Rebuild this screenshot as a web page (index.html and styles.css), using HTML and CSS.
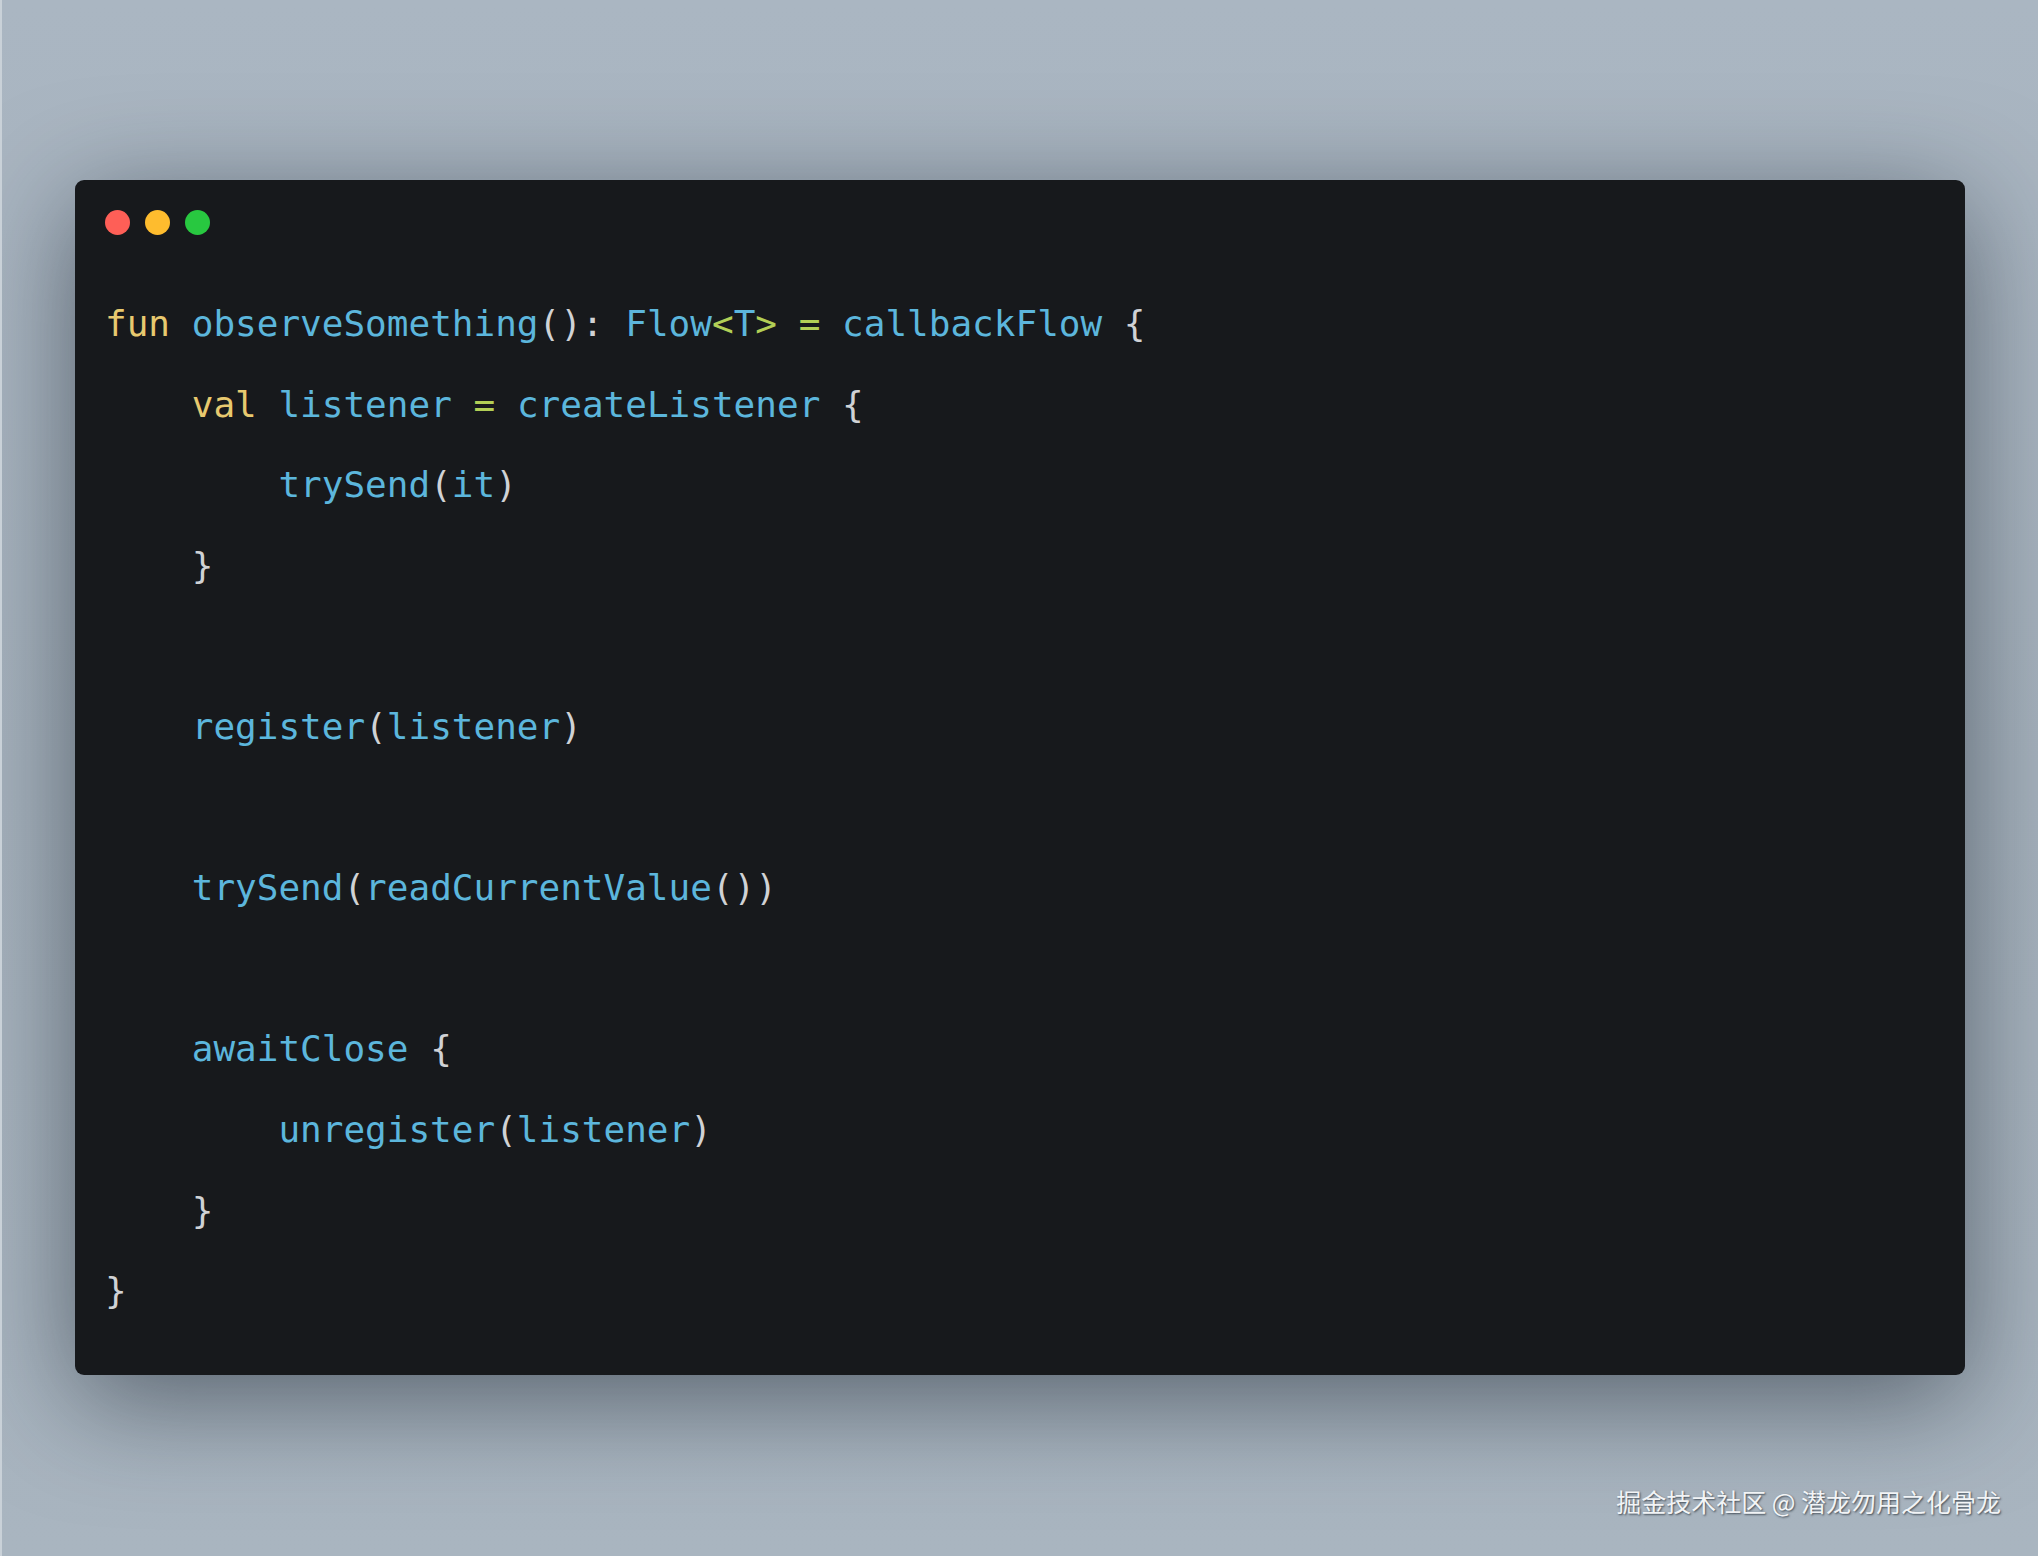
FILE: index.html
```html
<!DOCTYPE html>
<html lang="zh">
<head>
<meta charset="utf-8">
<title>callbackFlow</title>
<link rel="stylesheet" href="styles.css">
</head>
<body>
<div class="page">
  <div class="window">
    <div class="dots">
      <span class="dot red"></span>
      <span class="dot yellow"></span>
      <span class="dot green"></span>
    </div>
<pre class="code"><span class="kw">fun</span> <span class="fn">observeSomething</span><span class="p">()</span><span class="p">:</span> <span class="fn">Flow</span><span class="op">&lt;</span><span class="fn">T</span><span class="op">&gt;</span> <span class="op">=</span> <span class="fn">callbackFlow</span> <span class="p">{</span>
    <span class="kw">val</span> <span class="fn">listener</span> <span class="op">=</span> <span class="fn">createListener</span> <span class="p">{</span>
        <span class="fn">trySend</span><span class="p">(</span><span class="fn">it</span><span class="p">)</span>
    <span class="p">}</span>

    <span class="fn">register</span><span class="p">(</span><span class="fn">listener</span><span class="p">)</span>

    <span class="fn">trySend</span><span class="p">(</span><span class="fn">readCurrentValue</span><span class="p">())</span>

    <span class="fn">awaitClose</span> <span class="p">{</span>
        <span class="fn">unregister</span><span class="p">(</span><span class="fn">listener</span><span class="p">)</span>
    <span class="p">}</span>
<span class="p">}</span></pre>
  </div>
  <div class="footer">
    <span class="watermark">掘金技术社区 @ 潜龙勿用之化骨龙</span>
  </div>
</div>
</body>
</html>
```

FILE: styles.css
```css
html, body {
  margin: 0;
  padding: 0;
}

body {
  width: 2038px;
  height: 1556px;
  overflow: hidden;
  background: linear-gradient(180deg, #aab6c2 0%, #a6b2bd 50%, #a9b5c0 100%);
  border-left: 2px solid #c9d1d8;
  box-sizing: border-box;
}

.page {
  display: flex;
  flex-direction: column;
  padding: 180px 0 0 73px;
}

.window {
  width: 1890px;
  height: 1195px;
  box-sizing: border-box;
  background: #17191c;
  border-radius: 9px;
  padding: 30px 30px 0 30px;
  box-shadow: 0 24px 110px rgba(20, 30, 40, 0.55);
}

.dots {
  display: flex;
  gap: 15px;
}

.dot {
  width: 25px;
  height: 25px;
  border-radius: 50%;
  display: block;
}

.red { background: #fe5f57; }
.yellow { background: #febc2e; }
.green { background: #28c840; }

.code {
  margin: 49px 0 0 0;
  font-family: "DejaVu Sans Mono", monospace;
  font-size: 36px;
  line-height: 80.6px;
  color: #d0d2d5;
  white-space: pre;
}

.kw { color: #e8c96f; }
.fn { color: #5cb6dc; }
.op { color: #b2cf56; }
.p  { color: #d0d2d5; }

.footer {
  display: flex;
  justify-content: flex-end;
  padding-right: 37px;
  margin-top: 109px;
}

.watermark {
  font-family: "Noto Sans CJK SC", "Liberation Sans", sans-serif;
  font-size: 25px;
  line-height: 34px;
  color: #f2f4f6;
  text-shadow: 1px 1px 2px rgba(40, 50, 60, 0.8);
}
```
